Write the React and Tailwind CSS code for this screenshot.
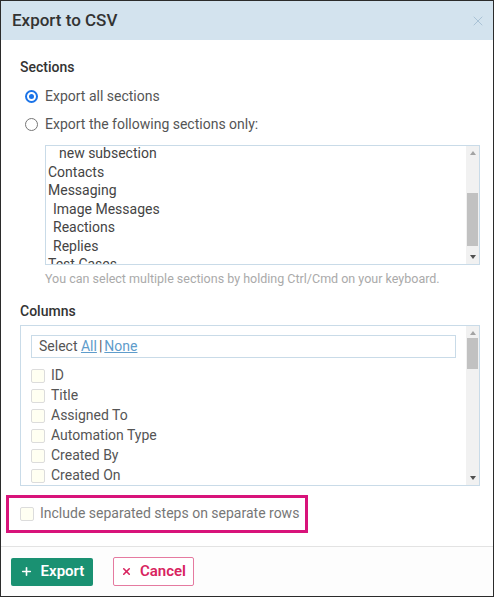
import { X, Plus } from 'lucide-react'

const SECTIONS = [
  { label: 'new subsection', indent: 'pl-[13px]' },
  { label: 'Contacts', indent: 'pl-[2px]' },
  { label: 'Messaging', indent: 'pl-[2px]' },
  { label: 'Image Messages', indent: 'pl-[7px]' },
  { label: 'Reactions', indent: 'pl-[7px]' },
  { label: 'Replies', indent: 'pl-[7px]' },
  { label: 'Test Cases', indent: 'pl-[2px]' },
]

const COLUMNS = ['ID', 'Title', 'Assigned To', 'Automation Type', 'Created By', 'Created On']

function Radio({ checked, label }) {
  return (
    <div className="flex items-center h-[28px] pl-[5px]">
      {checked ? (
        <span className="w-[13px] h-[13px] rounded-full bg-[#1a73e8] flex items-center justify-center">
          <span className="w-[9px] h-[9px] rounded-full border-[2px] border-white bg-[#1a73e8]" />
        </span>
      ) : (
        <span className="w-[13px] h-[13px] rounded-full border border-[#767676] bg-white" />
      )}
      <span className="ml-[7px] text-[14px] text-[#555]">{label}</span>
    </div>
  )
}

function Scrollbar({ thumbTop, thumbHeight }) {
  // fake native scrollbar
  return (
    <div className="w-[13px] h-full bg-[#f1f1f1] flex flex-col items-center relative">
      <span className="mt-[5px] w-0 h-0 border-x-[3px] border-x-transparent border-b-[4px] border-b-[#a3a3a3]" />
      <div className="flex-1" />
      <span className="mb-[5px] w-0 h-0 border-x-[3px] border-x-transparent border-t-[4px] border-t-[#505050]" />
      <div className="absolute left-[1px] right-[1px] bg-[#c1c1c1]" style={{ top: thumbTop, height: thumbHeight }} />
    </div>
  )
}

function Check() {
  return <span className="w-[14px] h-[14px] shrink-0 rounded-[2px] border border-[#dcdcdc] bg-[#fffff2]" />
}

export default function App() {
  return (
    <div className="w-[496px] h-[598px] bg-white font-['Roboto',sans-serif]">
      <div className="w-[494px] h-[597px] border border-[#2b2b2b] flex flex-col">
        {/* header */}
        <div className="h-[39px] shrink-0 bg-[#d3e3ee] flex items-center justify-between pl-[11px] pr-[7px]">
          <h1 className="text-[17px] font-medium text-[#333]">Export to CSV</h1>
          <X className="w-[16px] h-[16px] text-[#aac3d6]" strokeWidth={1.5} />
        </div>

        {/* body */}
        <div className="flex-1 pl-[19px] pr-[13px] pt-[18px]">
          <div className="text-[14px] font-medium text-[#333] leading-[18px]">Sections</div>
          <div className="mt-[6px]">
            <Radio checked label="Export all sections" />
            <Radio label="Export the following sections only:" />
          </div>

          <div className="ml-[25px] mt-[7px] h-[120px] border border-[#c9dbe8] flex overflow-hidden">
            <div className="flex-1 -mt-[2px] text-[14px] text-[#444]">
              {SECTIONS.map((s) => (
                <div key={s.label} className={`h-[18.5px] leading-[18.5px] ${s.indent}`}>
                  {s.label}
                </div>
              ))}
            </div>
            <Scrollbar thumbTop={47} thumbHeight={53} />
          </div>
          <p className="ml-[25px] mt-[5px] text-[12.5px] text-[#aaa]">
            You can select multiple sections by holding Ctrl/Cmd on your keyboard.
          </p>

          <div className="mt-[13px] text-[14px] font-medium text-[#333] leading-[18px]">Columns</div>
          <div className="mt-[5px] h-[161px] border border-[#c9dbe8] flex overflow-hidden">
            <div className="flex-1 pl-[10px] pr-[10px] pt-[9px]">
              <div className="h-[23px] border border-[#c9dbe8] flex items-center pl-[7px] text-[14px] text-[#555]">
                Select&nbsp;<a className="text-[#5e9ccb] underline">All</a>
                <span className="mx-[2px] text-[#555]">|</span>
                <a className="text-[#5e9ccb] underline">None</a>
              </div>
              <div className="mt-[8px]">
                {COLUMNS.map((c) => (
                  <div key={c} className="h-[20px] flex items-center">
                    <Check />
                    <span className="ml-[6px] text-[14px] text-[#555]">{c}</span>
                  </div>
                ))}
              </div>
            </div>
            <Scrollbar thumbTop={12} thumbHeight={31} />
          </div>

          {/* highlighted option */}
          <div className="-ml-[14px] mt-[9px] w-[302px] h-[38px] border-[3px] border-[#d8137a] flex items-center pl-[11px]">
            <Check />
            <span className="ml-[6px] text-[14px] text-[#777]">Include separated steps on separate rows</span>
          </div>
        </div>

        {/* footer */}
        <div className="h-[50px] shrink-0 border-t border-[#e3e3e3] bg-[#fdfdfd] flex items-center gap-[20px] pl-[10px]">
          <button className="h-[28px] w-[82px] rounded-[2px] bg-[#1a9172] text-white text-[15px] font-semibold flex items-center justify-center gap-[8px]">
            <Plus className="w-[13px] h-[13px]" strokeWidth={3} />
            Export
          </button>
          <button className="h-[29px] w-[81px] rounded-[2px] border border-[#e57aa0] bg-white text-[#d8245f] text-[15px] font-semibold flex items-center justify-center gap-[8px]">
            <X className="w-[11px] h-[11px]" strokeWidth={3.5} />
            Cancel
          </button>
        </div>
      </div>
    </div>
  )
}
